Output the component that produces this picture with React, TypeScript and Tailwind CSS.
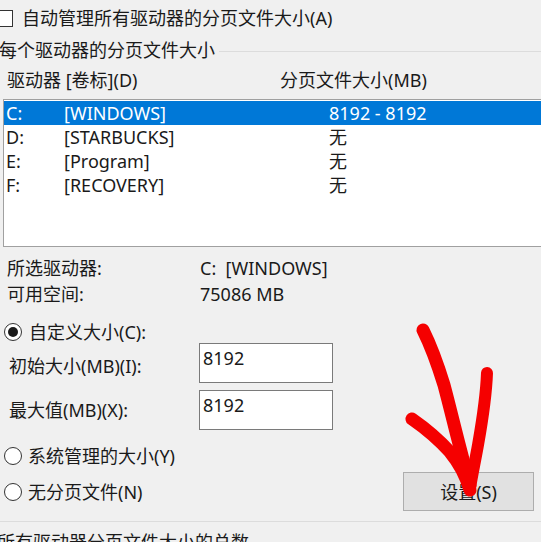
import React from "react";

const drives = [
  { letter: "C:", label: "[WINDOWS]", size: "8192 - 8192", selected: true },
  { letter: "D:", label: "[STARBUCKS]", size: "无" },
  { letter: "E:", label: "[Program]", size: "无" },
  { letter: "F:", label: "[RECOVERY]", size: "无" },
];

function Radio({ checked = false }: { checked?: boolean }) {
  return (
    <span className="flex items-center justify-center w-[18px] h-[18px] rounded-full border border-[#333] bg-white shrink-0">
      {checked && <span className="w-[10px] h-[10px] rounded-full bg-[#1a1a1a]" />}
    </span>
  );
}

function NumberBox({ value }: { value: string }) {
  return (
    <div className="w-[134px] h-[40px] border border-[#7a7a7a] bg-white px-[3px] pt-[3px] leading-[22px]">
      {value}
    </div>
  );
}

function RedArrow() {
  return (
    <svg
      className="absolute top-0 left-0 pointer-events-none"
      width="541"
      height="542"
      viewBox="0 0 541 542"
      fill="none"
      stroke="#f50000"
      strokeLinecap="round"
      strokeLinejoin="round"
    >
      <path d="M423 330 C 433 350, 440 372, 444 385 C 452 415, 460 450, 470 485" strokeWidth="13" />
      <path d="M487 373 C 486 400, 481 428, 478 445 C 475 462, 472 475, 470 488" strokeWidth="12" />
      <path d="M412 419 C 425 428, 440 441, 450 452 C 460 464, 466 476, 470 490" strokeWidth="13" />
    </svg>
  );
}

export default function App() {
  return (
    <div className="relative w-[541px] h-[542px] overflow-hidden bg-[#f0f0f0] text-[#1a1a1a] text-[18px] leading-[24px] font-['Noto_Sans','Noto_Sans_CJK_SC',sans-serif]">
      <div className="pt-[9px]">
        {/* auto manage */}
        <div className="flex items-center h-[18px]">
          <span className="ml-[-4px] w-[17px] h-[17px] border border-[#333] bg-white shrink-0" />
          <span className="ml-[9px] whitespace-nowrap">自动管理所有驱动器的分页文件大小(A)</span>
        </div>

        {/* group title */}
        <div className="flex items-center mt-[11px] h-[24px]">
          <span className="ml-[-1px] whitespace-nowrap">每个驱动器的分页文件大小</span>
          <span className="flex-1 h-px bg-[#dcdcdc] ml-[4px] mt-[3px]" />
        </div>

        {/* header */}
        <div className="flex mt-[6px] h-[24px] whitespace-nowrap">
          <span className="pl-[7px] w-[280px]">驱动器 [卷标](D)</span>
          <span>分页文件大小(MB)</span>
        </div>

        {/* list */}
        <div className="mt-[7px] ml-[3px] w-[580px] h-[148px] border border-[#a0a0a0] bg-white pt-px">
          {drives.map((d) => (
            <div
              key={d.letter}
              className={`flex h-[24px] items-center whitespace-nowrap ${d.selected ? "bg-[#0078d7] text-white" : ""}`}
            >
              <span className="pl-[2px] w-[60px]">{d.letter}</span>
              <span className="w-[265px]">{d.label}</span>
              <span>{d.size}</span>
            </div>
          ))}
        </div>

        {/* selected drive info */}
        <div className="mt-[8px] flex h-[26px] items-center whitespace-nowrap">
          <span className="pl-[7px] w-[200px]">所选驱动器:</span>
          <span>C:&nbsp; [WINDOWS]</span>
        </div>
        <div className="flex h-[26px] items-center whitespace-nowrap">
          <span className="pl-[7px] w-[200px]">可用空间:</span>
          <span>75086 MB</span>
        </div>

        {/* custom size */}
        <div className="mt-[14px] flex items-center h-[22px] pl-[4px] gap-[7px]">
          <Radio checked />
          <span>自定义大小(C):</span>
        </div>
        <div className="flex items-center whitespace-nowrap">
          <span className="pl-[9px] w-[199px] pt-[6px]">初始大小(MB)(I):</span>
          <NumberBox value="8192" />
        </div>
        <div className="flex items-center mt-[7px] whitespace-nowrap">
          <span className="pl-[9px] w-[199px]">最大值(MB)(X):</span>
          <NumberBox value="8192" />
        </div>

        <div className="mt-[14px] flex items-center h-[24px] pl-[4px] gap-[6px]">
          <Radio />
          <span>系统管理的大小(Y)</span>
        </div>
        <div className="mt-[4px] flex items-center h-[39px] pl-[4px]">
          <Radio />
          <span className="ml-[6px]">无分页文件(N)</span>
          <button
            type="button"
            className="ml-auto mr-[7px] w-[131px] h-[39px] border border-[#adadad] bg-[#e1e1e1] text-[#1a1a1a]"
          >
            设置(S)
          </button>
        </div>

        <div className="mt-[10px] h-px bg-[#dcdcdc]" />
        <div className="mt-[8px] ml-[-3px] whitespace-nowrap">所有驱动器分页文件大小的总数</div>
      </div>
      <RedArrow />
    </div>
  );
}
